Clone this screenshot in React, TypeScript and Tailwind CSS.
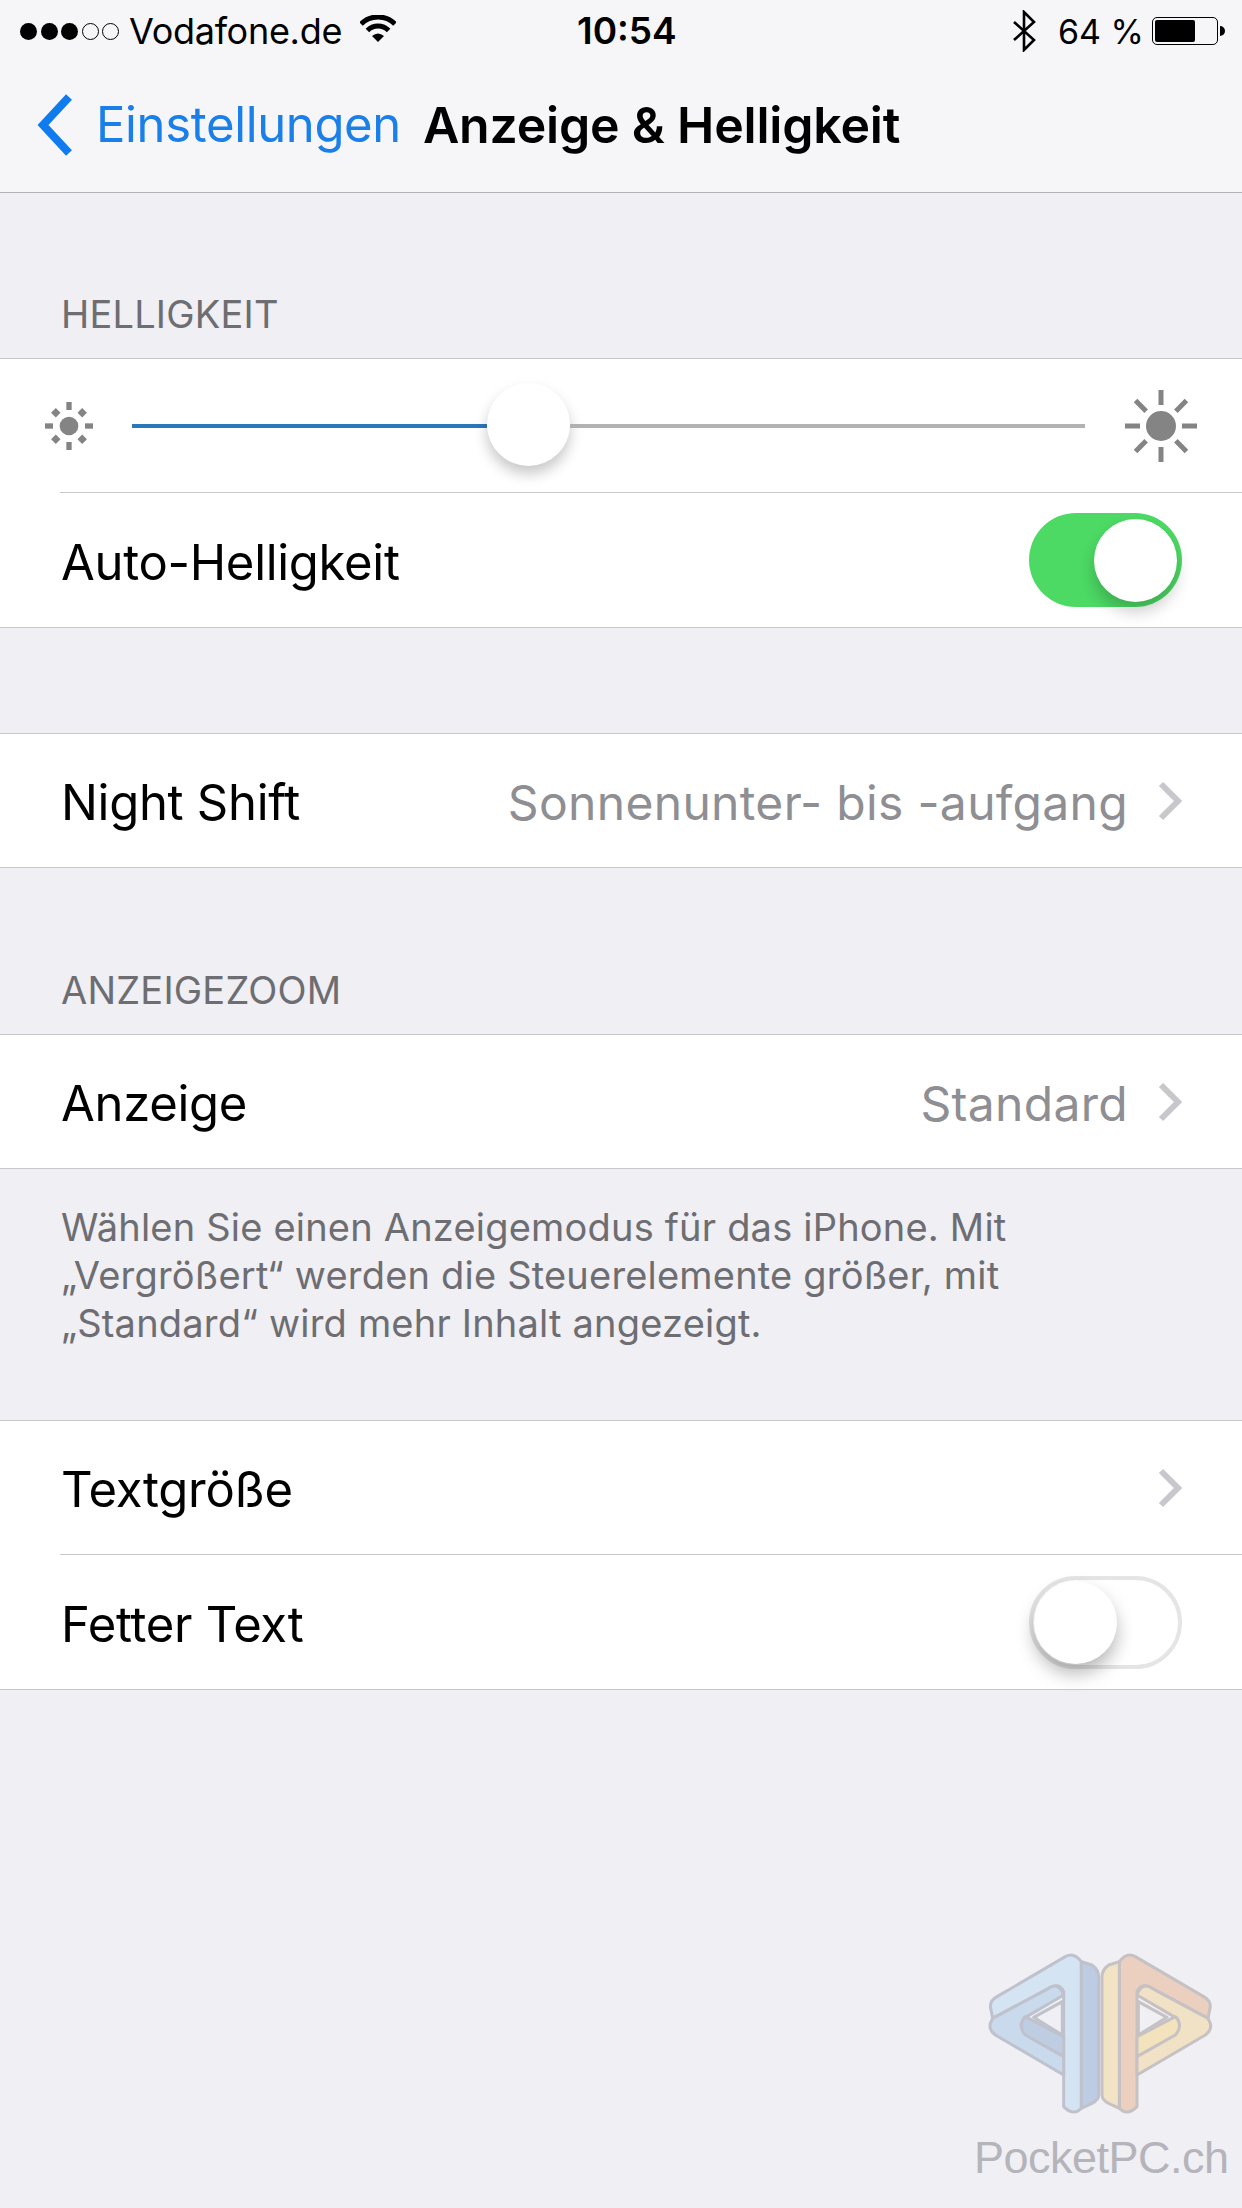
const font = "font-['Inter','Liberation_Sans',sans-serif]";

function Sun({ size, rays }: { size: number; rays: "short" | "long" }) {
  const angles = [0, 45, 90, 135, 180, 225, 270, 315];
  return (
    <svg width={size} height={size} viewBox="0 0 72 72" className="shrink-0">
      <circle cx="36" cy="36" r={rays === "long" ? 15 : 14} fill="#848484" />
      {angles.map((a) =>
        rays === "long" ? (
          <rect key={a} x="33.5" y="0" width="5" height="15" fill="#848484" transform={`rotate(${a} 36 36)`} />
        ) : a % 90 === 0 ? (
          <rect key={a} x="32" y="0" width="8" height="12" fill="#848484" transform={`rotate(${a} 36 36)`} />
        ) : (
          <rect key={a} x="31" y="3" width="10" height="10" fill="#848484" transform={`rotate(${a} 36 36)`} />
        )
      )}
    </svg>
  );
}

function Chevron() {
  return (
    <svg width="24" height="40" viewBox="0 0 24 40" className="shrink-0">
      <path d="M3 3 L20 20 L3 37" fill="none" stroke="#c7c7cc" strokeWidth="6" />
    </svg>
  );
}

function Row({ label, value, children, height = "h-[134px]" }: { label: string; value?: string; children?: React.ReactNode; height?: string }) {
  return (
    <div className={`flex ${height} items-center justify-between pl-[61px] pr-[60px]`}>
      <span className="pt-[5px] text-[49px] tracking-[-0.3px] text-black">{label}</span>
      {children ?? (
        <div className="flex items-center gap-[30px]">
          {value && <span className="pt-[5px] text-[48px] tracking-[0.32px] text-[#8e8e93]">{value}</span>}
          <Chevron />
        </div>
      )}
    </div>
  );
}

function Toggle({ on }: { on: boolean }) {
  return on ? (
    <div className="flex h-[94px] w-[153px] items-center justify-end rounded-full bg-[#4cd964] pr-[5px]">
      <div className="h-[83px] w-[83px] rounded-full bg-white shadow-[0_10px_16px_rgba(0,0,0,0.2)]" />
    </div>
  ) : (
    <div className="flex h-[93px] w-[153px] items-center rounded-full border-[4px] border-[#e5e5e5] bg-white pl-[1px]">
      <div className="h-[83px] w-[83px] rounded-full bg-white shadow-[0_10px_18px_rgba(0,0,0,0.28)]" />
    </div>
  );
}

function Watermark() {
  return (
    <div className="absolute left-[942px] top-[1900px] h-[308px] w-[300px]">
      <svg width="300" height="308" viewBox="0 0 900 924">
        <g stroke="#bfc1cc" strokeWidth="9" strokeLinejoin="round">
          <path d="M145 320 Q145 300 165 290 L370 170 Q395 155 418 185 L418 625 Q395 650 365 620 L365 275 Q350 245 320 265 L152 355 Z" fill="#d4e4f2" />
          <path d="M152 355 L320 265 Q350 245 365 285 L245 355 L365 470 L365 525 L160 405 Q140 390 145 370 Z" fill="#c8daeb" />
          <path d="M250 350 L365 410 L365 470 L250 405 Q225 375 250 350 Z" fill="#bfcde3" />
          <path d="M418 185 L450 195 Q470 210 470 230 L470 585 Q470 600 450 610 L418 625 Z" fill="#bdcce2" />
          <path d="M275 352 L361 305 L361 405 Z" fill="#efeff4" />
        </g>
        <g stroke="#c6c1c3" strokeWidth="9" strokeLinejoin="round" transform="matrix(-1 0 0 1 950 0)">
          <path d="M145 320 Q145 300 165 290 L370 170 Q395 155 418 185 L418 625 Q395 650 365 620 L365 275 Q350 245 320 265 L152 355 Z" fill="#ebd0c0" />
          <path d="M152 355 L320 265 Q350 245 365 285 L245 355 L365 470 L365 525 L160 405 Q140 390 145 370 Z" fill="#f1e2c6" />
          <path d="M250 350 L365 410 L365 470 L250 405 Q225 375 250 350 Z" fill="#f2e3bd" />
          <path d="M418 185 L450 195 Q470 210 470 230 L470 585 Q470 600 450 610 L418 625 Z" fill="#f2e3c4" />
          <path d="M275 352 L361 305 L361 405 Z" fill="#efeff4" />
        </g>
      </svg>
      <div className="absolute left-[32px] top-[229px] font-['Liberation_Sans',sans-serif] text-[45px] leading-[58px] tracking-[-0.5px] text-[#b4b4ba]">PocketPC.ch</div>
    </div>
  );
}

export default function App() {
  return (
    <div className={`relative h-[2208px] w-[1242px] overflow-hidden bg-[#efeff4] ${font}`}>
      {/* Status + nav */}
      <header className="h-[193px] border-b border-[#b2b2b6] bg-[#f6f6f9]">
        <div className="relative flex h-[62px] items-center justify-between pl-[20px] pr-[17px] text-[36px] text-black">
          <div className="flex items-center">
            <div className="flex items-center gap-[3.5px]">
              <i className="h-[17px] w-[17px] rounded-full bg-black" />
              <i className="h-[17px] w-[17px] rounded-full bg-black" />
              <i className="h-[17px] w-[17px] rounded-full bg-black" />
              <i className="h-[17px] w-[17px] rounded-full border border-black" />
              <i className="h-[17px] w-[17px] rounded-full border border-black" />
            </div>
            <span className="ml-[10px] text-[36px] tracking-[-0.3px]">Vodafone.de</span>
            <svg width="36" height="28" viewBox="0 0 36 28" className="ml-[18px] mb-[5px]">
              <path d="M1 9 A24 24 0 0 1 35 9 M7.4 15.4 A15 15 0 0 1 28.6 15.4" fill="none" stroke="#000" strokeWidth="5" />
              <path d="M12 21 Q18 16 24 21 L18 27 Z" fill="#000" />
            </svg>
          </div>
          <span className="absolute left-[577px] text-[37px] font-semibold">10:54</span>
          <div className="flex items-center">
            <svg width="24" height="42" viewBox="0 0 24 42">
              <path d="M2 12 L22 30 L12 40 L12 2 L22 12 L2 30" fill="none" stroke="#000" strokeWidth="2.6" />
            </svg>
            <span className="ml-[22px] text-[34px]">64 %</span>
            <div className="ml-[8px] flex h-[28px] w-[66px] items-center rounded-[5px] border border-black p-[2px]">
              <div className="h-full w-[40px] rounded-[2px] bg-black" />
            </div>
            <div className="ml-[2px] h-[10px] w-[5px] rounded-r-full bg-black" />
          </div>
        </div>
        <div className="flex h-[126px] items-center pl-[36px]">
          <svg width="38" height="64" viewBox="0 0 38 64" className="shrink-0">
            <path d="M33 4 L7 32 L33 60" fill="none" stroke="#0f7bef" strokeWidth="8" />
          </svg>
          <span className="ml-[22px] text-[49px] tracking-[-0.35px] text-[#1a7fe8]">Einstellungen</span>
          <span className="ml-[22px] text-[50px] font-semibold tracking-[-0.2px] text-black">Anzeige &amp; Helligkeit</span>
        </div>
      </header>

      {/* HELLIGKEIT */}
      <div className="flex h-[165px] items-end pb-[15px] pl-[61px] text-[38px] tracking-[0.2px] text-[#6d6d72]">HELLIGKEIT</div>
      <section className="border-y border-[#c8c7cc] bg-white">
        <div className="flex h-[133px] items-center pl-[45px] pr-[45px]">
          <Sun size={48} rays="short" />
          <div className="ml-[39px] flex items-center">
            <div className="h-[4px] w-[355px] bg-[#2a77bb]" />
            <div className="mb-[3px] h-[83px] w-[83px] shrink-0 rounded-full bg-white shadow-[0_8px_14px_rgba(0,0,0,0.22)]" />
            <div className="h-[4px] w-[515px] bg-[#b2b2b2]" />
          </div>
          <div className="ml-[40px]">
            <Sun size={72} rays="long" />
          </div>
        </div>
        <div className="ml-[60px] h-px bg-[#c8c7cc]" />
        <Row label="Auto-Helligkeit">
          <Toggle on />
        </Row>
      </section>

      <div className="h-[105px]" />
      <section className="border-y border-[#c8c7cc] bg-white">
        <Row label="Night Shift" value="Sonnenunter- bis -aufgang" height="h-[133px]" />
      </section>

      {/* ANZEIGEZOOM */}
      <div className="flex h-[166px] items-end pb-[15px] pl-[61px] text-[38px] tracking-[0.2px] text-[#6d6d72]">ANZEIGEZOOM</div>
      <section className="border-y border-[#c8c7cc] bg-white">
        <Row label="Anzeige" value="Standard" height="h-[133px]" />
      </section>
      <p className="h-[251px] pl-[61px] pr-[170px] pt-[34px] text-[38px] leading-[48px] tracking-[0.2px] text-[#6d6d72]">
        Wählen Sie einen Anzeigemodus für das iPhone. Mit „Vergrößert“ werden die Steuerelemente größer, mit „Standard“ wird mehr Inhalt angezeigt.
      </p>

      <section className="border-y border-[#c8c7cc] bg-white">
        <Row label="Textgröße" height="h-[133px]" />
        <div className="ml-[60px] h-px bg-[#c8c7cc]" />
        <Row label="Fetter Text">
          <Toggle on={false} />
        </Row>
      </section>

      <Watermark />
    </div>
  );
}
